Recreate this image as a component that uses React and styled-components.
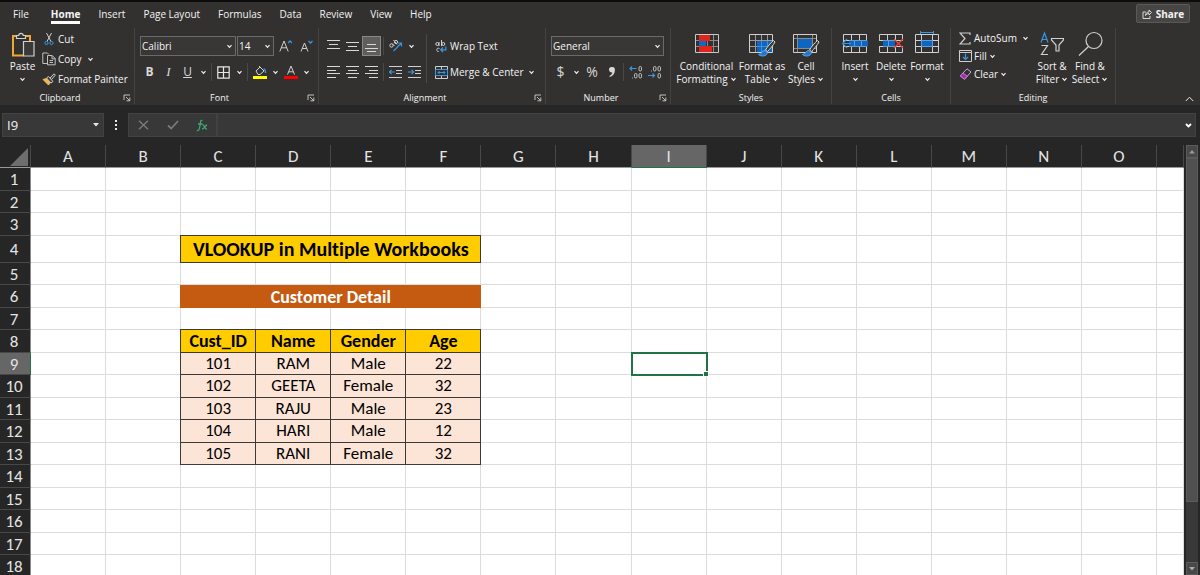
import React from 'react';
import styled, { createGlobalStyle, css } from 'styled-components';

const ui = '"Open Sans", "Noto Sans", sans-serif';
const sheet = 'Carlito, Lato, sans-serif';

const GlobalStyle = createGlobalStyle`
  * { box-sizing: border-box; }
  body { margin: 0; background: #262626; font-family: ${ui}; }
  button, input, select { font: inherit; color: inherit; margin: 0; padding: 0; border: 0; background: none; }
`;

const Page = styled.div`
  display: flex;
  flex-direction: column;
  height: 100vh;
  overflow: hidden;
  color: #f4f4f4;
  font-size: 10px;
  line-height: 14px;
`;

/* ---------- tabs ---------- */
const TabBar = styled.nav`
  display: flex;
  align-items: flex-start;
  height: 28px;
  flex: none;
  padding: 2px 10px 0 4px;
  border-top: 2px solid #0c0c0c;
  background: #323130;
`;
const Tab = styled.button`
  height: 20px;
  margin: 0 9px;
  padding-top: 3px;
  border-bottom: 3px solid ${p => (p.$active ? '#fff' : 'transparent')};
  font-weight: ${p => (p.$active ? 700 : 400)};
  &:first-child { margin-right: 13px; }
`;
const Share = styled.button`
  display: flex;
  align-items: center;
  justify-content: center;
  gap: 4px;
  width: 54px;
  height: 19px;
  margin-left: auto;
  border: 1px solid #5a5957;
  border-radius: 2px;
  background: #484644;
  font-weight: 700;
`;

/* ---------- ribbon ---------- */
const Ribbon = styled.div`
  display: flex;
  flex: none;
  height: 77px;
  background: #323130;
`;
const GroupBox = styled.section`
  display: flex;
  flex-direction: column;
  width: ${p => p.$w}px;
  height: 76px;
  padding-top: 1px;
  border-right: 1px solid #444341;
`;
const GroupBody = styled.div`
  display: flex;
  flex: 1;
  min-height: 0;
  padding: ${p => p.$pad || '0 5px'};
`;
const GroupFoot = styled.div`
  display: flex;
  align-items: center;
  height: 12px;
  font-size: 9px;
  line-height: 12px;
`;
const GroupName = styled.span`
  flex: 1;
  text-align: center;
`;
const Launcher = styled.button`
  display: flex;
  width: 14px;
  justify-content: center;
`;
const Stack = styled.div`
  display: flex;
  flex-direction: column;
  width: ${p => (p.$w ? p.$w + 'px' : 'auto')};
  padding-top: ${p => p.$top || 0}px;
  padding-left: ${p => p.$left || 0}px;
  gap: ${p => p.$gap || 0}px;
`;
const Row = styled.div`
  display: flex;
  align-items: center;
  gap: ${p => p.$gap || 0}px;
  height: ${p => p.$h || 20}px;
`;
const Tool = styled.button`
  display: flex;
  flex: none;
  align-items: center;
  justify-content: center;
  width: ${p => p.$w || 19}px;
  height: 20px;
  ${p => p.$on && css`background: #605e5c; box-shadow: inset 0 0 0 1px #8a8886;`}
`;
const Command = styled.button`
  display: flex;
  align-items: center;
  height: ${p => p.$h || 20}px;
  gap: 2px;
  white-space: nowrap;
`;
const IconSlot = styled.span`
  display: flex;
  justify-content: center;
  width: 14px;
`;
const Tall = styled.button`
  display: flex;
  flex-direction: column;
  align-items: center;
  flex: none;
  width: ${p => p.$w}px;
  padding-top: 2px;
  line-height: 13px;
  white-space: nowrap;
`;
const Line = styled.span`
  display: flex;
  align-items: center;
  gap: 2px;
  height: 13px;
`;
const Rule = styled.span`
  width: 1px;
  height: ${p => p.$h || 18}px;
  margin: 0 2px;
  background: #4a4947;
`;
const Glyph = styled.span`
  font-size: ${p => p.$size || 12}px;
  font-weight: ${p => (p.$bold ? 700 : 400)};
  font-style: ${p => (p.$italic ? 'italic' : 'normal')};
  font-family: ${p => (p.$serif ? '"Liberation Serif", serif' : ui)};
  text-decoration: ${p => (p.$under ? 'underline' : 'none')};
  color: #d8d8d8;
`;
const SelectWrap = styled.label`
  display: grid;
  align-items: center;
  width: ${p => p.$w}px;
  height: 20px;
  border: 1px solid #6b6a68;
  background: #383735;
  > * { grid-area: 1 / 1; }
  > select { appearance: none; width: 100%; height: 18px; padding-left: 1px; outline: 0; }
  > svg { justify-self: end; margin-right: 2px; pointer-events: none; }
`;
const Collapse = styled.button`
  display: flex;
  align-items: flex-end;
  margin-left: auto;
  padding: 0 6px 3px;
`;

/* ---------- formula bar ---------- */
const FormulaBar = styled.div`
  display: flex;
  flex: none;
  height: 40px;
  padding: 8px 4px 8px 2px;
`;
const Field = styled.div`
  display: flex;
  align-items: center;
  background: #383838;
  border: 1px solid #424242;
  width: ${p => (p.$w ? p.$w + 'px' : 'auto')};
  flex: ${p => (p.$w ? 'none' : '1')};
  > input { flex: 1; min-width: 0; padding-left: 4px; outline: 0; font-size: 13px; }
  > button { display: flex; justify-content: center; }
`;
const NameArrow = styled.button` width: 14px; `;
const FxTool = styled.button` width: 29px; `;
const Dots = styled.span`
  display: flex;
  align-items: center;
  justify-content: center;
  width: 24px;
`;

/* ---------- sheet ---------- */
const SheetArea = styled.main`
  display: flex;
  flex: 1;
  min-height: 0;
  overflow: hidden;
`;
const GridView = styled.div`
  flex: 1;
  min-width: 0;
  overflow: hidden;
`;
const Grid = styled.table`
  width: 100%;
  table-layout: fixed;
  border-spacing: 0;
  background: #fff;
  color: #000;
  font-family: ${sheet};
  font-size: 17px;
  line-height: 18px;
  font-variant-ligatures: none;
  text-align: center;
`;
const NumCol = styled.col` width: 31px; `;
const EdgeCol = styled.col` width: 27px; `;
const ColHead = styled.th`
  height: 23px;
  padding: 2px 0 0;
  font-weight: 400;
  color: #e4e4e4;
  background: ${p => (p.$on ? '#666' : '#262626')};
  border-right: 1px solid #484848;
  border-bottom: 1px solid ${p => (p.$on ? '#217346' : '#9a9a9a')};
`;
const Corner = styled(ColHead)`
  > svg { display: block; margin-left: auto; margin-right: 2px; }
`;
const RowHead = styled.th`
  padding: 2px 2px 0 0;
  line-height: 16px;
  font-weight: 400;
  color: #e4e4e4;
  background: ${p => (p.$on ? '#666' : '#262626')};
  border-right: 1px solid ${p => (p.$on ? '#217346' : '#8a8a8a')};
  border-bottom: 1px solid #484848;
`;
const BodyRow = styled.tr` height: ${p => p.$h}px; `;
const Cell = styled.td`
  padding: 0;
  border-right: 1px solid #dcdcdc;
  border-bottom: 1px solid #dcdcdc;
`;
const Boxed = styled(Cell)`
  position: relative;
  border-color: #3c3a36;
  box-shadow: -1px 0 0 #3c3a36, 0 -1px 0 #3c3a36, -1px -1px 0 #3c3a36;
  background: ${p => (p.$head ? '#ffcc00' : '#fce4d6')};
  font-size: ${p => (p.$head ? 18 : 17)}px;
  font-weight: ${p => (p.$head ? 700 : 400)};
`;
const Title = styled(Boxed)`
  font-size: 20px;
  line-height: 22px;
`;
const Banner = styled(Cell)`
  position: relative;
  padding-top: 1px;
  border-color: #c55a11;
  background: #c55a11;
  box-shadow: -1px 0 0 #c55a11;
  color: #fff;
  font-size: 18px;
  font-weight: 700;
`;
const Selected = styled(Cell)`
  position: relative;
  outline: 2px solid #217346;
  outline-offset: -1px;
  &::after {
    content: '';
    position: absolute;
    right: -2px;
    bottom: -2px;
    width: 4px;
    height: 4px;
    background: #217346;
    outline: 1px solid #fff;
  }
`;
const Scroll = styled.div`
  display: flex;
  flex-direction: column;
  flex: none;
  width: 12px;
  margin: 0 2px;
  background: #383838;
`;
const ScrollButton = styled.button`
  display: flex;
  align-items: center;
  justify-content: center;
  height: 13px;
  border: 1px solid #5c5c5c;
  background: #484848;
`;
const Thumb = styled.div`
  flex: 0 0 80%;
  border: 1px solid #5c5c5c;
  background: #505050;
`;
const Track = styled.div` flex: 1; `;

/* ---------- icons ---------- */
const Svg = ({ w, h, top = 0, children, ...r }) => (
  <svg width={w} height={h} viewBox={`0 ${-top} ${w} ${h}`} fill="none" stroke="#d0d0d0" aria-hidden="true" {...r}>{children}</svg>
);
const Chevron = () => <Svg w={7} h={5} stroke="#f0f0f0" strokeWidth="1.2"><path d="M1.5 1.2 3.5 3.4 5.5 1.2" /></Svg>;
const Drop = () => <Tool $w={12} aria-label="More"><Chevron /></Tool>;
const LaunchIcon = () => <Svg w={8} h={8} strokeWidth="0.9"><path d="M1 6V1h6M3 3l3.5 3.5M6.8 3.5v3.3H3.5" /></Svg>;
const PasteIcon = () => (
  <Svg w={24} h={29} top={1}>
    <path d="M5 4H2v19.500h10.500M15 4h4v5" stroke="#f0a830" strokeWidth="2" />
    <path d="M5.500 3.500h2.200C8 .6 12 .6 12.300 3.500h2.200v3h-9z" strokeWidth="1.200" />
    <path d="M12.500 9.500h10.500v14.500h-10.500z" fill="#3a3938" strokeWidth="1.200" />
  </Svg>
);
const CutIcon = () => (
  <Svg w={10} h={14}>
    <path d="M2.500 1 7 9.500M7.500 1 3 9.500" />
    <circle cx="2.500" cy="11" r="1.600" stroke="#3a96dd" /><circle cx="7.500" cy="11" r="1.600" stroke="#3a96dd" />
  </Svg>
);
const CopyIcon = () => (
  <Svg w={14} h={14}><path d="M5 11.500H.8V1h4.700l1.500 1.500M5.500 3.500h4.700l3 3v6.300H5.500zM10 3.800v3h3M7.500 8.500h3.500M7.500 10.500h3.500" strokeWidth="0.900" /></Svg>
);
const PainterIcon = () => (
  <Svg w={14} h={13}>
    <path d="M1 6.500 4.500 5.500 8 10 6.500 12z" fill="#f5b84c" stroke="#f5b84c" />
    <path d="M4.500 5 6.500 3.500l4.500 5L9 10zM8 5 12 .8l1.300 1.300L9.500 6.500" fill="#3a3938" />
  </Svg>
);
const GrowIcon = ({ down }) => (
  <Svg w={13} h={14}>
    {down ? <path d="M1 12.500 4.500 4 8 12.500M2.300 9.500h4.400" /> : <path d="M.8 12.500 5 2l4.200 10.500M2.300 8.800h5.400" />}
    <path d={down ? 'M8.500 2 10.500 4 12.500 2' : 'M9 4l2-2 2 2'} stroke="#3a96dd" strokeWidth="1.300" />
  </Svg>
);
const BordersIcon = () => <Svg w={13} h={13} stroke="#e8e8e8"><path d="M.8.8h11.400v11.400H.8zM6.500 1v11M1 6.500h11" strokeWidth="1.200" /></Svg>;
const FillColorIcon = () => (
  <Svg w={14} h={14}>
    <path d="M3 6 7 2l4 4-4 3.500H5zM6.500 3V1" /><path d="M10.500 4c1.500 0 2 1.500 2 4" stroke="#3a96dd" strokeWidth="1.500" />
    <path d="M0 12.500h14" stroke="#ff0" strokeWidth="3" />
  </Svg>
);
const FontColorIcon = () => (
  <Svg w={14} h={14}><path d="M3.500 9.500 7 1l3.500 8.500M4.700 6.800h4.600" /><path d="M0 12.500h14" stroke="#f00" strokeWidth="3" /></Svg>
);
const Lines = ({ d }) => <Svg w={13} h={12} stroke="#d8d8d8"><path d={d} /></Svg>;
const OrientIcon = () => (
  <Svg w={14} h={14}>
    <circle cx="2.500" cy="6.500" r="1.700" /><path d="M3 4.500 5.500 7M4.500 1 8 5.500" /><circle cx="7" cy="3" r="1.600" />
    <path d="M4.500 12 12.500 4M9 4h3.500v3.500" stroke="#3a96dd" strokeWidth="1.200" />
  </Svg>
);
const IndentIcon = ({ right }) => (
  <Svg w={13} h={12}><path d="M0 .5h13M7 4.500h6M7 7.500h6M0 11.500h13" /><path d={right ? 'M0 6h5.500M3.500 3.800 5.700 6 3.500 8.200' : 'M5.800 6H.6M2.600 3.800.4 6 2.600 8.200'} stroke="#3a96dd" strokeWidth="1.200" /></Svg>
);
const WrapIcon = () => (
  <Svg w={12} h={13}>
    <circle cx="2.300" cy="4" r="1.500" /><path d="M4 2v4M6.500 0v6M4.500 8.500c-3-1.500-4 3-.8 3" /><circle cx="8.300" cy="4" r="1.500" />
    <path d="M10.800 6.500v3.300H6M8 7.500 5.800 9.800 8 12" stroke="#3a96dd" strokeWidth="1.300" />
  </Svg>
);
const MergeIcon = () => (
  <Svg w={13} h={13}>
    <path d="M.5.5h12v12H.5zM6.500.5v2.500M6.500 10v2.500" /><path d="M.5 3.500h12v6H.5zM3 6.500h7M4.500 5 3 6.500 4.500 8M8.500 5 10 6.500 8.500 8" stroke="#3a96dd" />
  </Svg>
);
const DecimalIcon = ({ less }) => (
  <Svg w={14} h={14} strokeWidth="0.900">
    {less ? (
      <><path d="M3 6h.8" /><rect x="5.500" y="1.500" width="2.500" height="4.500" rx="1.200" /><rect x="10" y="1.500" width="2.500" height="4.500" rx="1.200" /><rect x="10" y="8.500" width="2.500" height="4.500" rx="1.200" /><path d="M0 10.500h6.500M4.500 8.500l2 2-2 2" stroke="#3a96dd" strokeWidth="1.200" /></>
    ) : (
      <><rect x="10" y="1.500" width="2.500" height="4.500" rx="1.200" /><path d="M3 13h.8" /><rect x="5.500" y="8.500" width="2.500" height="4.500" rx="1.200" /><rect x="10" y="8.500" width="2.500" height="4.500" rx="1.200" /><path d="M7.500 3.500H1M3 1.500l-2 2 2 2" stroke="#3a96dd" strokeWidth="1.200" /></>
    )}
  </Svg>
);
const Comma = () => <Svg w={8} h={12} stroke="none" fill="#d8d8d8"><path d="M4 1a2.800 2.800 0 0 1 2.900 3C6.900 7.500 5 10 1.800 11l-.5-1C3.300 9 4.200 7.800 4.300 6.500 2.500 6.700 1 5.500 1 3.800A2.800 2.800 0 0 1 4 1z" /></Svg>;
const gridLines = 'M.5 7.500h23M.5 13.500h23M6.500 1v18M12.500 1v18M18.500 1v18';
const CondIcon = () => (
  <Svg w={24} h={29} top={2}>
    <path d={gridLines} stroke="#8a8a8a" />
    <path d="M4 2h11v6H4zM4 13h13v6H4z" fill="#e0251b" stroke="none" /><path d="M4 8h7v5H4z" fill="#1268c4" stroke="none" />
    <path d="M.5 1.500h23v18H.5z" stroke="#c8c8c8" />
  </Svg>
);
const Brush = () => (
  <>
    <path d="M24.500 7.500C22 9.500 18 14 16.500 17l2 1.500C20.500 16.500 24.500 12 26 9z" fill="#3a3938" stroke="#d8d8d8" />
    <path d="M16 17.500c-3-.5-3 3.500-6.500 4 2.500 2.500 8.500 2 9-2z" fill="#1e78d0" stroke="#6cb4f0" strokeWidth="0.800" />
  </>
);
const TableIcon = () => (
  <Svg w={27} h={29} top={2}>
    <path d={gridLines} stroke="#9a9a9a" /><path d="M8 8h15v11H8z" fill="#0f66c0" stroke="none" />
    <path d="M12.500 8v11M18.500 8v11M8 13.500h15" stroke="#5a9fe0" strokeWidth="0.700" /><path d="M.5 1.500h23v18H.5z" /><Brush />
  </Svg>
);
const StyleIcon = () => (
  <Svg w={27} h={29} top={2}>
    <path d="M.5 5.500h23M.5 15.500h23M4.500 1v18M19.500 1v18" stroke="#8a8a8a" /><path d="M5 6h14v9H5z" fill="#0f66c0" stroke="none" />
    <path d="M.5 1.500h23v18H.5z" /><Brush />
  </Svg>
);
const InsertIcon = () => (
  <Svg w={26} h={29} top={2}><path d="M1.500 1.500h23v18h-23zM1.500 7.500h23M1.500 13.500h23M9.500 1.500v18M17.500 1.500v18" /><path d="M7 7.500h19v6H7z" fill="#0f66c0" stroke="none" /><path d="M12.500 7.500v6M19.500 7.500v6" stroke="#58a0e0" /><path d="M9 10.500H1M5 6l-4.500 4.500L5 15" stroke="#3a96dd" strokeWidth="1.200" /></Svg>
);
const DeleteIcon = () => (
  <Svg w={26} h={29} top={2}><path d="M1.500 1.500h23v18h-23zM1.500 7.500h23M1.500 13.500h23M9.500 1.500v18M17.500 1.500v18" /><path d="M0 8h5v5H0zM17 8h9v5h-9z" fill="#323130" stroke="none" /><path d="M5 7.500h12v6H5z" fill="#0f66c0" stroke="none" /><path d="M10.500 7.500v6" stroke="#58a0e0" /><path d="M16 6l9 9M25 6l-9 9" stroke="#e8403a" strokeWidth="1.400" /></Svg>
);
const FormatIcon = () => (
  <Svg w={24} h={29}><path d="M.5 3.500h23v18H.5zM.5 9.500h23M.5 15.500h23M6.500 3.500v18M17.500 3.500v18" /><path d="M6.500 9.500h11v6h-11z" fill="#0f66c0" stroke="#58a0e0" /><path d="M5.500 1.500h13M5.500 0v3M18.500 0v3" stroke="#3a96dd" /></Svg>
);
const SumIcon = () => <Svg w={12} h={13}><path d="M11 3V1H1l5 5.500L1 12h10v-2" strokeWidth="1.200" /></Svg>;
const FillIcon = () => <Svg w={13} h={12}><path d="M.5.500h12v11H.5zM.5 2.500h12" /><path d="M6.500 3.500V9.500M4 7l2.500 2.500L9 7" stroke="#3a96dd" strokeWidth="1.200" /></Svg>;
const ClearIcon = () => <Svg w={13} h={12}><path d="M8 .8 12 4 5.500 11.300 1.200 7.800z" stroke="#d0a8da" /><path d="M4 5 1.200 7.800l4.300 3.500L8.200 8.200z" fill="#a030b0" stroke="#c878d4" /></Svg>;
const SortIcon = () => (
  <Svg w={24} h={29} top={1}><path d="M1 10.500 4.500 1 8 10.500M2.200 7.500h4.600" stroke="#3a96dd" strokeWidth="1.200" /><path d="M1.500 13.500H7.500L1.500 22.500H8" strokeWidth="1.200" /><path d="M11.500 6.500h12v1.500L19 13v6h-3v-6l-4.500-5z" strokeWidth="1.200" /></Svg>
);
const FindIcon = () => <Svg w={25} h={29} top={1} strokeWidth="1.200"><circle cx="16" cy="8.500" r="8" /><path d="M10.500 14.500 1 23.500" /></Svg>;

/* ---------- ribbon groups ---------- */
const Group = ({ name, w, pad, launch, children }) => (
  <GroupBox $w={w} aria-label={name}>
    <GroupBody $pad={pad}>{children}</GroupBody>
    <GroupFoot><GroupName>{name}</GroupName>{launch && <Launcher aria-label={`${name} settings`}><LaunchIcon /></Launcher>}</GroupFoot>
  </GroupBox>
);
const Picker = ({ w, label, value }) => (
  <SelectWrap $w={w}><select aria-label={label} defaultValue={value}><option>{value}</option></select><Chevron /></SelectWrap>
);
const TallButton = ({ w, icon, first, second }) => (
  <Tall $w={w}>{icon}<Line>{first}</Line><Line>{second}<Chevron /></Line></Tall>
);
const IconCommand = ({ icon, label, h, drop }) => (
  <Command $h={h}><IconSlot>{icon}</IconSlot>{label}{drop && <Chevron />}</Command>
);

const tabs = ['File', 'Home', 'Insert', 'Page Layout', 'Formulas', 'Data', 'Review', 'View', 'Help'];
const columns = 'ABCDEFGHIJKLMNO'.split('');
const heights = [23, 22, 23, 27, 22, 23, 22, 23, 22, 23, 22, 23, 22, 23, 22, 23, 22, 23];
const records = {
  8: ['Cust_ID', 'Name', 'Gender', 'Age'],
  9: ['101', 'RAM', 'Male', '22'],
  10: ['102', 'GEETA', 'Female', '32'],
  11: ['103', 'RAJU', 'Male', '23'],
  12: ['104', 'HARI', 'Male', '12'],
  13: ['105', 'RANI', 'Female', '32'],
};

function cellsFor(row) {
  const out = [];
  for (let c = 0; c < 16; c += 1) {
    if (row === 4 && c === 2) { out.push(<Title key={c} $head colSpan={4}>VLOOKUP in Multiple Workbooks</Title>); c += 3; }
    else if (row === 6 && c === 2) { out.push(<Banner key={c} colSpan={4}>Customer Detail</Banner>); c += 3; }
    else if (records[row] && c >= 2 && c <= 5) out.push(<Boxed key={c} $head={row === 8}>{records[row][c - 2]}</Boxed>);
    else if (row === 9 && c === 8) out.push(<Selected key={c} />);
    else out.push(<Cell key={c} />);
  }
  return out;
}

export default function App() {
  return (
    <Page>
      <GlobalStyle />
      <TabBar>
        {tabs.map(t => <Tab key={t} $active={t === 'Home'}>{t}</Tab>)}
        <Share>
          <Svg w={10} h={10} stroke="#e8e8e8"><path d="M4 3H1v6.500h7V7M3.500 6.500C3.500 4 5 3 7 3V1l2.500 2.500L7 6V4.500C5.500 4.500 4.500 5 3.500 6.500z" strokeWidth="0.900" /></Svg>
          Share
        </Share>
      </TabBar>
      <Ribbon>
        <Group name="Clipboard" w={135} launch pad="0 0 0 3px">
          <TallButton w={39} icon={<PasteIcon />} first="Paste" />
          <Stack>
            <IconCommand icon={<CutIcon />} label="Cut" />
            <Row $gap={3}><IconCommand icon={<CopyIcon />} label="Copy" /><Drop /></Row>
            <IconCommand icon={<PainterIcon />} label="Format Painter" />
          </Stack>
        </Group>
        <Group name="Font" w={184} launch>
          <Stack $top={7} $gap={6}>
            <Row $gap={1}>
              <Picker w={96} label="Font" value="Calibri" />
              <Picker w={37} label="Font size" value="14" />
              <Tool $w={20} aria-label="Grow font"><GrowIcon /></Tool>
              <Tool $w={20} aria-label="Shrink font"><GrowIcon down /></Tool>
            </Row>
            <Row>
              <Tool><Glyph $bold>B</Glyph></Tool>
              <Tool><Glyph $italic $serif $size={13}>I</Glyph></Tool>
              <Tool><Glyph $under>U</Glyph></Tool>
              <Drop /><Rule />
              <Tool aria-label="Borders"><BordersIcon /></Tool><Drop /><Rule />
              <Tool aria-label="Fill color"><FillColorIcon /></Tool><Drop />
              <Tool aria-label="Font color"><FontColorIcon /></Tool><Drop />
            </Row>
          </Stack>
        </Group>
        <Group name="Alignment" w={227} launch>
          <Stack $top={7} $gap={6}>
            <Row>
              <Tool aria-label="Top"><Lines d="M0 .5h13M2 4.500h9M0 8.500h13" /></Tool>
              <Tool aria-label="Middle"><Lines d="M0 2.500h13M2 6.500h9M0 10.500h13" /></Tool>
              <Tool $on aria-label="Bottom"><Lines d="M2 4.500h9M0 8.500h13M2 11.500h9" /></Tool>
              <Rule />
              <Tool aria-label="Orientation"><OrientIcon /></Tool><Drop />
            </Row>
            <Row>
              <Tool aria-label="Left"><Lines d="M0 .5h13M0 4.500h9M0 7.500h13M0 11.500h9" /></Tool>
              <Tool aria-label="Center"><Lines d="M0 .5h13M2 4.500h9M0 7.500h13M2 11.500h9" /></Tool>
              <Tool aria-label="Right"><Lines d="M0 .5h13M4 4.500h9M0 7.500h13M4 11.500h9" /></Tool>
              <Rule />
              <Tool aria-label="Decrease indent"><IndentIcon /></Tool>
              <Tool aria-label="Increase indent"><IndentIcon right /></Tool>
            </Row>
          </Stack>
          <Stack $top={5}><Rule $h={49} /></Stack>
          <Stack $top={7} $left={5} $gap={6}>
            <IconCommand icon={<WrapIcon />} label="Wrap Text" />
            <Row $gap={2}><IconCommand icon={<MergeIcon />} label="Merge & Center" /><Drop /></Row>
          </Stack>
        </Group>
        <Group name="Number" w={125} launch>
          <Stack $top={7} $gap={6}>
            <Picker w={113} label="Number format" value="General" />
            <Row>
              <Tool><Glyph $size={14}>$</Glyph></Tool><Drop />
              <Tool $w={20}><Glyph $size={14}>%</Glyph></Tool>
              <Tool aria-label="Comma style"><Comma /></Tool>
              <Rule />
              <Tool aria-label="Increase decimal"><DecimalIcon /></Tool>
              <Tool aria-label="Decrease decimal"><DecimalIcon less /></Tool>
            </Row>
          </Stack>
        </Group>
        <Group name="Styles" w={161} pad="0 0 0 7px">
          <TallButton w={57} icon={<CondIcon />} first="Conditional" second="Formatting" />
          <TallButton w={54} icon={<TableIcon />} first="Format as" second="Table" />
          <TallButton w={34} icon={<StyleIcon />} first="Cell" second="Styles" />
        </Group>
        <Group name="Cells" w={119}>
          <TallButton w={36} icon={<InsertIcon />} first="Insert" />
          <TallButton w={36} icon={<DeleteIcon />} first="Delete" />
          <TallButton w={36} icon={<FormatIcon />} first="Format" />
        </Group>
        <Group name="Editing" w={165} pad="0 0 0 7px">
          <Stack $w={75}>
            <Row $h={18} $gap={3}><IconCommand icon={<SumIcon />} label="AutoSum" h={18} /><Drop /></Row>
            <IconCommand icon={<FillIcon />} label="Fill" h={18} drop />
            <IconCommand icon={<ClearIcon />} label="Clear" h={18} drop />
          </Stack>
          <TallButton w={38} icon={<SortIcon />} first="Sort &" second="Filter" />
          <TallButton w={38} icon={<FindIcon />} first="Find &" second="Select" />
        </Group>
        <Collapse aria-label="Collapse ribbon"><Svg w={9} h={6} stroke="#e8e8e8"><path d="M.8 5 4.500 1.200 8.200 5" /></Svg></Collapse>
      </Ribbon>
      <FormulaBar>
        <Field $w={102}>
          <input aria-label="Name box" defaultValue="I9" />
          <NameArrow aria-label="Names"><Svg w={6} h={4} stroke="none" fill="#e8e8e8"><path d="M0 0h6L3 3.500z" /></Svg></NameArrow>
        </Field>
        <Dots><Svg w={3} h={10} stroke="none" fill="#e8e8e8"><path d="M0 0h2v2H0zM0 4h2v2H0zM0 8h2v2H0z" /></Svg></Dots>
        <Field $w={89}>
          <FxTool aria-label="Cancel"><Svg w={11} h={10} stroke="#7a7a7a"><path d="M1 .8 10 9.200M10 .8 1 9.200" strokeWidth="1.400" /></Svg></FxTool>
          <FxTool aria-label="Enter"><Svg w={12} h={10} stroke="#7a7a7a"><path d="M1 5.500 4.200 8.500 11 1" strokeWidth="1.800" /></Svg></FxTool>
          <FxTool aria-label="Insert function"><Svg w={12} h={13} stroke="#3fa873"><path d="M6.500 1.500C4.500.5 4.500 3 4 6.500S3 12 .8 11.500M2 5h4.500M6.500 6c2-.5 2 4.500 4.500 4M11 6C9 6 8.500 10 6 10" strokeWidth="1.300" /></Svg></FxTool>
        </Field>
        <Field>
          <input aria-label="Formula" />
          <NameArrow aria-label="Expand formula bar"><Svg w={7} h={5} stroke="#fff" strokeWidth="1.800"><path d="M1 1 3.500 3.500 6 1" /></Svg></NameArrow>
        </Field>
      </FormulaBar>
      <SheetArea>
        <GridView>
          <Grid>
            <colgroup><NumCol />{columns.map(c => <col key={c} />)}<EdgeCol /></colgroup>
            <thead>
              <tr>
                <Corner aria-label="Select all"><Svg w={18} h={18} stroke="none" fill="#6e6e6e"><path d="M18 0v18H0z" /></Svg></Corner>
                {columns.map(c => <ColHead key={c} $on={c === 'I'}>{c}</ColHead>)}
                <ColHead />
              </tr>
            </thead>
            <tbody>
              {heights.map((h, i) => (
                <BodyRow key={i} $h={h}><RowHead $on={i === 8}>{i + 1}</RowHead>{cellsFor(i + 1)}</BodyRow>
              ))}
            </tbody>
          </Grid>
        </GridView>
        <Scroll>
          <ScrollButton aria-label="Scroll up"><Svg w={6} h={4} stroke="none" fill="#999"><path d="M0 3.500h6L3 0z" /></Svg></ScrollButton>
          <Thumb />
          <Track />
          <ScrollButton aria-label="Scroll down"><Svg w={6} h={4} stroke="none" fill="#aaa"><path d="M0 0h6L3 3.500z" /></Svg></ScrollButton>
        </Scroll>
      </SheetArea>
    </Page>
  );
}
